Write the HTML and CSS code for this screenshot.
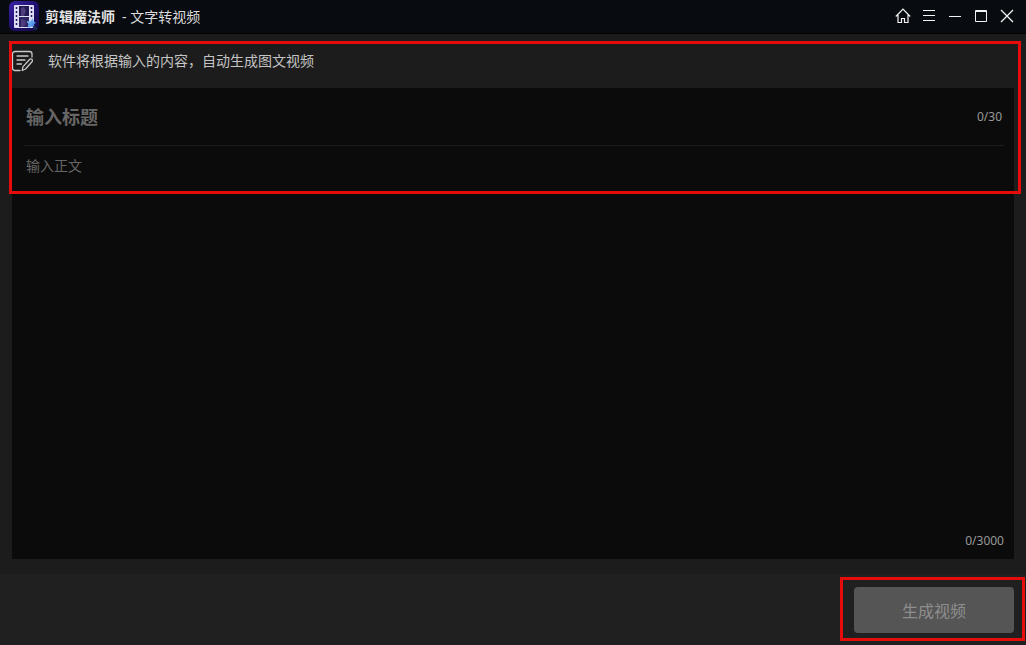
FILE: index.html
```html
<!DOCTYPE html>
<html lang="zh-CN">
<head>
  <meta charset="UTF-8" />
  <meta name="viewport" content="width=device-width, initial-scale=1.0" />
  <title>剪辑魔法师 - 文字转视频</title>
  <link rel="stylesheet" href="styles.css">
</head>
<body>
  <header class="titlebar">
    <svg class="logo" viewBox="0 0 30 30" aria-hidden="true">
      <defs>
        <linearGradient id="logoBg" x1="0" y1="0" x2="1" y2="1">
          <stop offset="0" stop-color="#3d22a8" />
          <stop offset="0.5" stop-color="#1f1070" />
          <stop offset="1" stop-color="#140a42" />
        </linearGradient>
        <linearGradient id="logoStar" x1="0" y1="0" x2="1" y2="1">
          <stop offset="0" stop-color="#9ad4ff" />
          <stop offset="1" stop-color="#2a6fdc" />
        </linearGradient>
      </defs>
      <rect width="30" height="30" rx="6" fill="url(#logoBg)" />
      <rect x="5" y="4" width="20" height="23" rx="1" fill="#dcdcf2" />
      <rect x="10" y="5" width="10" height="10" fill="#23184f" />
      <rect x="10" y="16" width="10" height="10" fill="#2b2460" />
      <path d="M12 7l3-1 2 4-2 5h-3zM12 18l4 1 1 4-3 3h-2z" fill="#4d3d7c" />
      <path d="M7.500 6v20M22.500 6v12" stroke="#251a66" stroke-width="1.500" stroke-dasharray="2 2" />
      <path d="M24 17l.5 3.500 2.500 1-2 2 .5 3-3-1-4 1.500 1-4-2-2.500 4-.5z" fill="url(#logoStar)" />
      <path d="M24.500 25.500l3 3" stroke="#1c2c4c" stroke-width="2.500" />
    </svg>
    <div class="brand">
      <h1 class="app-name">剪辑魔法师</h1>
      <span class="page-name">- 文字转视频</span>
    </div>
    <div class="window-buttons">
      <button type="button" aria-label="主页">
        <svg viewBox="0 0 16 16"><path d="M.8 8.500L8 1.200l7.200 7.300M3 7v7.500h3.500v-4h3v4H13V7" stroke-width="1.200" /></svg>
      </button>
      <button type="button" aria-label="菜单">
        <svg viewBox="0 0 16 16"><path d="M2 2.500h12M2 7.500h12M2 12.500h12" /></svg>
      </button>
      <button type="button" aria-label="最小化">
        <svg viewBox="0 0 16 16"><path d="M2 8.500h12" /></svg>
      </button>
      <button type="button" aria-label="最大化">
        <svg viewBox="0 0 16 16"><path d="M2.500 2.500h11v11h-11zM2 3.500h12" /></svg>
      </button>
      <button type="button" aria-label="关闭">
        <svg viewBox="0 0 16 16"><path d="M2 2l12 12M14 2L2 14" stroke-width="1.300" /></svg>
      </button>
    </div>
  </header>

  <main class="content">
    <div class="notice">
      <svg class="notice-icon" viewBox="0 0 22 22" aria-hidden="true">
        <path d="M8 20.500H3a2.500 2.500 0 0 1-2.500-2.500V4A2.500 2.500 0 0 1 3 1.500h14.500A2.500 2.500 0 0 1 20 4v3M5 6h11M5 10h8M5 14h4.500" />
        <path d="M17.500 9.500a1.600 1.600 0 0 1 2.500 2.200l-6.500 7.300-3.300 1.500.7-3.600z" />
      </svg>
      <p>软件将根据输入的内容，自动生成图文视频</p>
    </div>

    <form class="editor" id="editor">
      <div class="title-row">
        <input class="title-input" type="text" maxlength="30" placeholder="输入标题" aria-label="标题">
        <span class="count">0/30</span>
      </div>
      <textarea class="body-input" maxlength="3000" placeholder="输入正文" aria-label="正文"></textarea>
      <span class="count body-count">0/3000</span>
    </form>
    <div class="mark mark-input"></div>
  </main>

  <footer class="footer">
    <button class="generate" type="submit" form="editor" disabled>生成视频</button>
    <div class="mark mark-generate"></div>
  </footer>
</body>
</html>
```
FILE: styles.css
```css
* {
  box-sizing: border-box;
}
body {
  margin: 0;
  min-height: 100vh;
  display: flex;
  flex-direction: column;
  background: #1c1c1c;
  color: #c4c4c4;
  font-family: "Noto Sans", "Noto Sans CJK SC", sans-serif;
  font-size: 14px;
  line-height: 20px;
}
button, input, textarea {
  font-family: inherit;
  border: none;
  padding: 0;
}

/* Title bar */
.titlebar {
  display: flex;
  align-items: center;
  height: 34px;
  padding: 0 11px 2px 9px;
  background: #080b0f;
  border-bottom: 1px solid #000;
}
.logo {
  width: 30px;
  height: 30px;
  margin-right: 6px;
}
.brand {
  display: flex;
  gap: 7px;
  padding-top: 2px;
}
.app-name {
  margin: 0;
  font-size: 14px;
  line-height: 20px;
  font-weight: bold;
  color: #e4e4e4;
}
.page-name {
  color: #dcdcdc;
}
.window-buttons {
  display: flex;
  gap: 10px;
  margin-left: auto;
}
.window-buttons button {
  display: flex;
  width: 16px;
  height: 16px;
  background: none;
}
.window-buttons svg {
  width: 16px;
  height: 16px;
  fill: none;
  stroke: #f2f2f2;
}

/* Text entry */
.content {
  position: relative;
  flex: 1;
  display: flex;
  flex-direction: column;
  padding: 0 12px 15px;
}
.notice {
  display: flex;
  align-items: center;
  gap: 14px;
  height: 54px;
}
.notice p {
  margin: 0;
}
.notice-icon {
  width: 22px;
  height: 22px;
  fill: none;
  stroke: #c8c8c8;
  stroke-width: 1.3;
  stroke-linecap: round;
  stroke-linejoin: round;
}
.editor {
  flex: 1;
  display: flex;
  flex-direction: column;
  padding: 0 10px 8px 12px;
  background: #0b0b0b;
}
.title-row {
  display: flex;
  align-items: center;
  height: 58px;
  padding: 0 2px;
  border-bottom: 1px solid #1c1c1c;
}
.title-input {
  flex: 1;
  min-width: 0;
  height: 32px;
  background: none;
  color: #ddd;
  font-size: 18px;
  font-weight: bold;
}
.body-input {
  flex: 1;
  padding: 10px 2px;
  background: none;
  color: #ccc;
  font-size: 14px;
  line-height: 20px;
  resize: none;
}
.title-input:focus, .body-input:focus {
  outline: none;
}
::placeholder {
  color: #666;
  opacity: 1;
}
.count {
  color: #999;
  font-size: 12px;
}
.body-count {
  align-self: flex-end;
}

/* Bottom bar */
.footer {
  position: relative;
  display: flex;
  justify-content: flex-end;
  padding: 13px 12px 12px;
  background: #202020;
}
.generate {
  width: 160px;
  height: 46px;
  border-radius: 4px;
  background: #555;
  color: #8e8e8e;
  font-size: 16px;
}

/* Red highlight frames */
.mark {
  position: absolute;
  border: 3px solid #e60c0c;
  pointer-events: none;
}
.mark-input {
  top: 7px;
  left: 9px;
  right: 5px;
  height: 153px;
}
.mark-generate {
  top: 3px;
  right: 1px;
  bottom: 4px;
  width: 185px;
}
```
